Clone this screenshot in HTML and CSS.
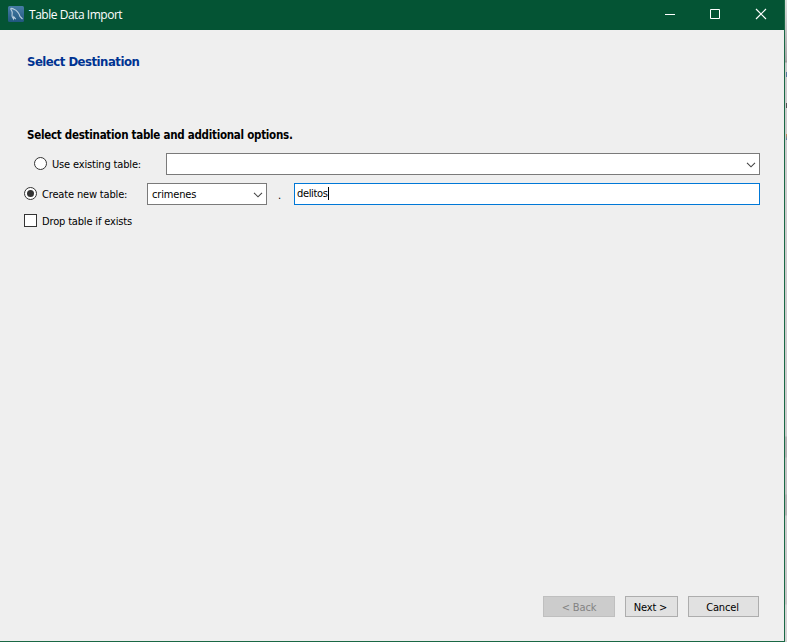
FILE: index.html
```html
<!DOCTYPE html>
<html lang="en">
<head>
<meta charset="utf-8">
<title>Table Data Import</title>
<link rel="stylesheet" href="styles.css">
</head>
<body>
<div class="desktop">
  <main class="window">
    <header class="titlebar">
      <svg class="app-icon" width="16" height="16" viewBox="0 0 16 16">
        <defs><linearGradient id="sea" x1="0" y1="0" x2="0" y2="1"><stop offset="0" stop-color="#477da6"/><stop offset="1" stop-color="#20577f"/></linearGradient></defs>
        <rect width="16" height="16" rx="1.5" fill="url(#sea)"/>
        <path d="M2.500 2.500C4 2.200 5 2.600 6 3.200 9 4.500 11 7 12 10.500l2.500 2.500M2.500 2.500l1.500 3c.8 2-.5 3 .3 5.300l1.200 2 .3-2 2 2.300" fill="none" stroke="#b9cfdf" stroke-width="1.100"/>
      </svg>
      <h1 class="caption">Table Data Import</h1>
      <svg class="controls" width="138" height="29" viewBox="0 0 138 29" fill="none" stroke="#fff">
        <path d="M19 14.500h10M64.500 9.500h9v9h-9z"/>
        <path d="M110 9l10 10M120 9l-10 10" stroke-width="1.200"/>
      </svg>
    </header>
    <section class="content">
      <h2 class="page-title">Select Destination</h2>
      <h3 class="prompt">Select destination table and additional options.</h3>
      <div class="row existing">
        <span class="radio"></span>
        <span class="label existing-label">Use existing table:</span>
        <div class="field combo existing-combo"><svg class="chevron" width="10" height="6" viewBox="0 0 10 6"><path d="M1 .8l4 4 4-4"/></svg></div>
      </div>
      <div class="row create">
        <span class="radio checked"></span>
        <span class="label create-label">Create new table:</span>
        <div class="field combo schema"><span class="schema-name">crimenes</span><svg class="chevron" width="10" height="6" viewBox="0 0 10 6"><path d="M1 .8l4 4 4-4"/></svg></div>
        <span class="dot">.</span>
        <div class="field table-name"><span class="value">delitos</span><span class="caret"></span></div>
      </div>
      <div class="row drop">
        <span class="checkbox"></span>
        <span class="label drop-label">Drop table if exists</span>
      </div>
    </section>
    <footer class="actions">
      <div class="button back disabled">&lt; Back</div>
      <div class="button next">Next &gt;</div>
      <div class="button cancel">Cancel</div>
    </footer>
  </main>
  <aside class="behind"></aside>
</div>
</body>
</html>
```
FILE: styles.css
```css
* { box-sizing: border-box; }
body {
  margin: 0;
  font: 11px/14px "DejaVu Sans Condensed", "DejaVu Sans", sans-serif;
  font-stretch: condensed;
  letter-spacing: -0.16px;
  color: #000;
}
h1, h2, h3 { margin: 0; }
.desktop { display: flex; width: 787px; height: 642px; overflow: hidden; }
.window {
  display: flex;
  flex-direction: column;
  width: 785px;
  background: #efefef;
  border-right: 1px solid #1a6845;
  border-bottom: 1px solid #1a6845;
}
.titlebar {
  display: flex;
  height: 30px;
  padding-left: 8px;
  background: #045434;
}
.app-icon { margin-top: 6px; }
.caption {
  margin: 6px 0 0 5px;
  font: 12px/17px "Open Sans", sans-serif;
  letter-spacing: -0.47px;
  color: #fff;
}
.controls { margin-left: auto; }
.content { flex: 1; padding: 24px 24px 0; }
.page-title {
  margin-left: 3px;
  font-size: 13px;
  line-height: 16px;
  font-weight: bold;
  letter-spacing: -0.5px;
  color: #003392;
}
.prompt {
  margin: 58px 0 0 3px;
  font-size: 11.5px;
  line-height: 14px;
  font-weight: bold;
  letter-spacing: -0.27px;
}
.row { display: flex; align-items: center; white-space: nowrap; }
.existing { height: 22px; margin-top: 11px; padding-left: 10px; }
.create { height: 22px; margin-top: 8px; }
.drop { height: 13px; margin-top: 9px; }
.radio {
  display: flex;
  flex: none;
  align-items: center;
  justify-content: center;
  width: 13px;
  height: 13px;
  margin-bottom: 1px;
  border: 1px solid #333;
  border-radius: 50%;
  background: #fff;
}
.checked::after { content: ""; width: 7px; height: 7px; border-radius: 50%; background: #333; }
.checkbox { width: 13px; height: 13px; border: 1px solid #333; background: #fff; }
.label { margin-left: 5px; padding-top: 2px; }
.existing-label { width: 114px; }
.create-label { width: 105px; }
.field { display: flex; height: 22px; border: 1px solid #7a7a7a; background: #fff; }
.combo { align-items: center; }
.existing-combo { width: 594px; }
.schema { width: 120px; padding-left: 4px; }
.schema-name { padding-top: 2px; }
.chevron {
  margin: 1px 3px 0 auto;
  fill: none;
  stroke: #444;
  stroke-width: 1.1;
}
.dot { width: 27px; padding: 4px 0 0 11px; }
.table-name { width: 466px; padding: 2px 0 0 2px; border-color: #0078d7; }
.value { padding-top: 1px; letter-spacing: -0.35px; }
.caret { width: 1px; height: 13px; margin-top: 1px; background: #000; }
.actions {
  display: flex;
  justify-content: flex-end;
  gap: 10px;
  height: 45px;
  padding-right: 25px;
}
.button {
  height: 21px;
  border: 1px solid #adadad;
  background: #e1e1e1;
  line-height: 21px;
  text-align: center;
}
.back { width: 72px; }
.next { width: 53px; padding-right: 2px; }
.cancel { width: 71px; padding-right: 2px; }
.disabled { border-color: #bfbfbf; background: #ccc; color: #838383; }
.behind {
  width: 2px;
  background:
    linear-gradient(#5b7ba0, #5b7ba0) 1px 72px / 1px 5px no-repeat,
    linear-gradient(#555, #555) 1px 103px / 1px 5px no-repeat,
    linear-gradient(#d09050, #5580b0) 1px 134px / 1px 6px no-repeat,
    linear-gradient(#d8dcda 0, #aaa 60px, #999 62px, #ccc 63px, #ccc 436px, #b4b4b4 437px, #b4b4b4 457px, #c3c3c3 458px, #c3c3c3 494px, #b4b4b4 495px, #b4b4b4 515px, #ccc 516px, #c5c5c5 604px, #d4d4d4 605px);
}
```
